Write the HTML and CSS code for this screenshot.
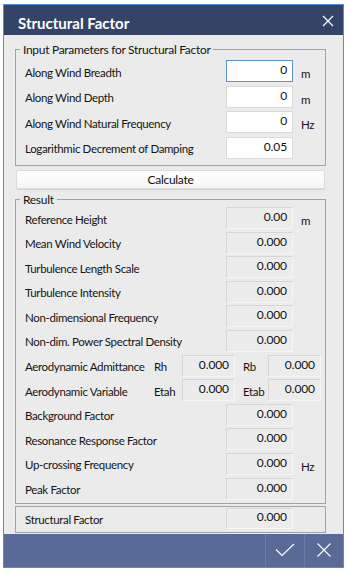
FILE: index.html
```html
<!DOCTYPE html>
<html>
<head>
<meta charset="utf-8">
<link rel="stylesheet" href="styles.css">
</head>
<body>
<div class="window">
  <div class="titlebar">
    <span class="title">Structural Factor</span>
    <span class="close"><svg width="12" height="12" viewBox="0 0 12 12"><path d="M1 1L11 11M11 1L1 11" stroke="#fff" stroke-width="1.2"/></svg></span>
  </div>
  <div class="content">
    <fieldset class="group g-input">
      <legend>Input Parameters for Structural Factor</legend>
      <div class="row"><span class="label">Along Wind Breadth</span><span class="field edit focus">0</span><span class="unit">m</span></div>
      <div class="row"><span class="label">Along Wind Depth</span><span class="field edit">0</span><span class="unit">m</span></div>
      <div class="row"><span class="label">Along Wind Natural Frequency</span><span class="field edit">0</span><span class="unit">Hz</span></div>
      <div class="row"><span class="label">Logarithmic Decrement of Damping</span><span class="field edit">0.05</span><span class="unit"></span></div>
    </fieldset>
    <button class="calc">Calculate</button>
    <fieldset class="group g-result">
      <legend>Result</legend>
      <div class="row"><span class="label">Reference Height</span><span class="field ro">0.00</span><span class="unit">m</span></div>
      <div class="row"><span class="label">Mean Wind Velocity</span><span class="field ro">0.000</span><span class="unit"></span></div>
      <div class="row"><span class="label">Turbulence Length Scale</span><span class="field ro">0.000</span><span class="unit"></span></div>
      <div class="row"><span class="label">Turbulence Intensity</span><span class="field ro">0.000</span><span class="unit"></span></div>
      <div class="row"><span class="label">Non-dimensional Frequency</span><span class="field ro">0.000</span><span class="unit"></span></div>
      <div class="row"><span class="label">Non-dim. Power Spectral Density</span><span class="field ro">0.000</span><span class="unit"></span></div>
      <div class="row row4"><span class="label">Aerodynamic Admittance</span><span class="sub">Rh</span><span class="field ro">0.000</span><span class="sub sub2">Rb</span><span class="field ro">0.000</span></div>
      <div class="row row4"><span class="label">Aerodynamic Variable</span><span class="sub">Etah</span><span class="field ro">0.000</span><span class="sub sub2">Etab</span><span class="field ro">0.000</span></div>
      <div class="row"><span class="label">Background Factor</span><span class="field ro">0.000</span><span class="unit"></span></div>
      <div class="row"><span class="label">Resonance Response Factor</span><span class="field ro">0.000</span><span class="unit"></span></div>
      <div class="row"><span class="label">Up-crossing Frequency</span><span class="field ro">0.000</span><span class="unit">Hz</span></div>
      <div class="row"><span class="label">Peak Factor</span><span class="field ro">0.000</span><span class="unit"></span></div>
    </fieldset>
    <fieldset class="group g-final">
      <div class="row row-final"><span class="label">Structural Factor</span><span class="field ro">0.000</span><span class="unit"></span></div>
    </fieldset>
  </div>
  <div class="footer">
    <span class="fbtn"><svg width="20" height="14" viewBox="0 0 20 14"><path d="M1 6.5L7 12.5L19 1" fill="none" stroke="#fff" stroke-width="1.1"/></svg></span>
    <span class="fbtn"><svg width="16" height="16" viewBox="0 0 16 16"><path d="M1.5 1.5L14.5 14.5M14.5 1.5L1.5 14.5" stroke="#fff" stroke-width="1.1"/></svg></span>
  </div>
</div>
</body>
</html>
```
FILE: styles.css
```css
html, body {
  margin: 0;
  padding: 0;
  background: #ffffff;
}
body {
  font-family: "Lato", "Liberation Sans", sans-serif;
  font-size: 11.5px;
  letter-spacing: -0.35px;
  color: #141414;
}
.window {
  margin: 4px 0 0 3px;
  width: 339px;
  border: 1px solid #4f8fdf;
  background: #ebebeb;
  display: flex;
  flex-direction: column;
}
.titlebar {
  height: 30px;
  background: #344466;
  display: flex;
  align-items: center;
  justify-content: space-between;
  padding: 0 9px 0 14px;
}
.title {
  color: #ffffff;
  font-weight: bold;
  font-size: 15px;
  letter-spacing: 0;
  margin-top: 5px;
}
.close {
  display: flex;
  margin-top: 1px;
}
.content {
  padding: 7px 17px 1px 11px;
  display: flex;
  flex-direction: column;
}
.group {
  margin: 0;
  padding: 0;
  border: 1px solid #a3a3a3;
  min-width: 0;
}
.group legend {
  margin-left: 4px;
  padding: 0 3px;
  font-size: 12px;
  letter-spacing: -0.3px;
  line-height: 15px;
  height: 15px;
}
.g-input {
  padding: 3px 0 6px 0;
  display: flex;
  flex-direction: column;
  gap: 3.5px;
}
.g-result {
  margin-top: 3.5px;
  padding: 0 0 3px 0;
  display: flex;
  flex-direction: column;
  gap: 2.6px;
}
.g-final {
  margin-top: 2px;
  padding: 1px 0 3px 0;
}
.row {
  display: grid;
  grid-template-columns: 201px 67px 31px;
  padding-left: 9px;
  height: 22px;
  align-items: center;
}
.row-final {
  height: 21px;
}
.row4 {
  grid-template-columns: 129px 28px 53px 33px 53px;
}
.label, .sub, .unit {
  white-space: nowrap;
  padding-top: 2px;
}
.field {
  box-sizing: border-box;
  height: 100%;
  display: flex;
  align-items: center;
  justify-content: flex-end;
  padding: 0 5px 3px 0;
  font-size: 12px;
  letter-spacing: -0.1px;
  color: #111;
}
.edit {
  background: #ffffff;
  border: 1px solid #dadada;
}
.edit.focus {
  border-color: #5b93d6;
}
.ro {
  background: #ececec;
  border: 1px solid #d6d6d6;
  border-right-color: #f6f6f6;
  border-bottom-color: #f6f6f6;
}
.unit {
  padding-left: 8px;
  padding-top: 5px;
}
.sub2 {
  padding-left: 8px;
}
.calc {
  margin-top: 4px;
  margin-left: 1px;
  margin-right: 1px;
  height: 19px;
  padding: 0;
  border: 1px solid #dcdcdc;
  border-radius: 2px;
  background: linear-gradient(#ffffff, #f6f6f6);
  font-family: inherit;
  font-size: 12px;
  letter-spacing: -0.3px;
  color: #111;
  box-shadow: 0 1px 0 #d2d2d2;
}
.footer {
  height: 33px;
  background: #5a6a97;
  display: flex;
  justify-content: flex-end;
}
.fbtn {
  width: 38px;
  border-left: 1px solid #6d7ca6;
  display: flex;
  align-items: center;
  justify-content: center;
}
```
